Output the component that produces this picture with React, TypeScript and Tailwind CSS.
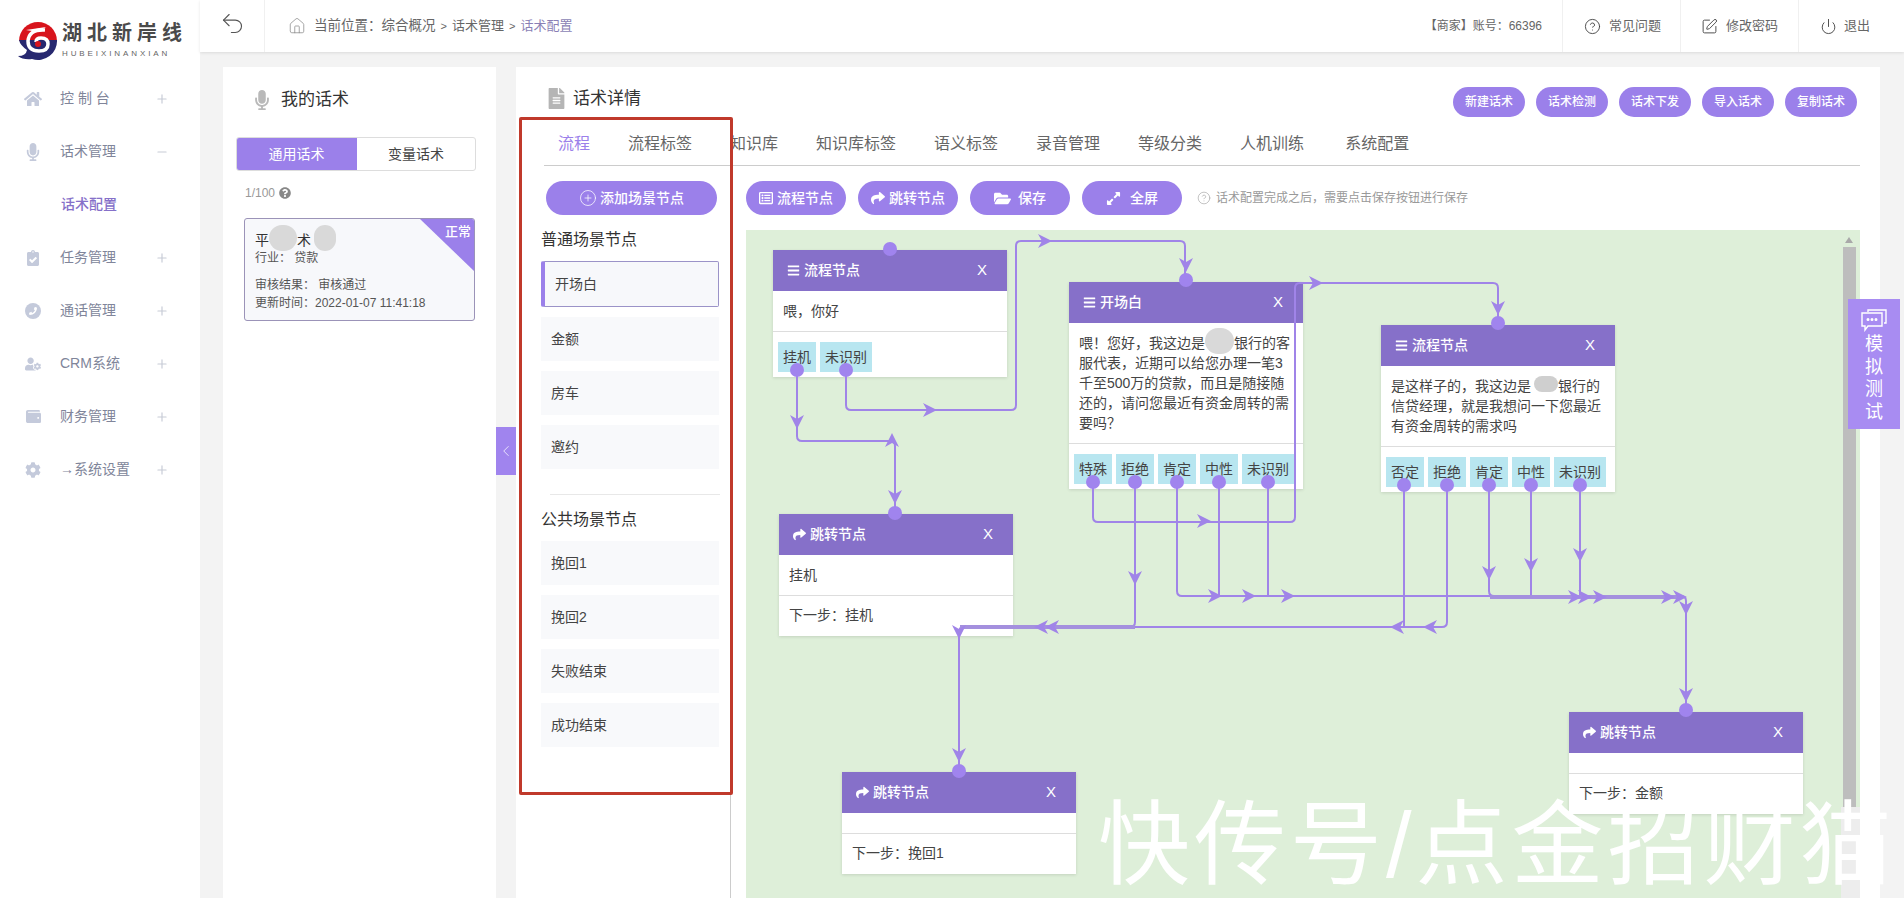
import type { ReactNode } from 'react'
import {
  FaHome, FaMicrophone, FaClipboardCheck, FaPhone, FaUserCog, FaWallet, FaCog,
  FaQuestionCircle, FaFileAlt, FaBars, FaShare, FaFolderOpen, FaExpandAlt, FaRegListAlt,
} from 'react-icons/fa'
import { Plus, Minus, Undo2, House, CircleHelp, SquarePen, Power, ChevronLeft, CirclePlus } from 'lucide-react'

const menu = [
  { label: '控 制 台', icon: <FaHome size={18} /> },
  { label: '话术管理', icon: <FaMicrophone size={18} />, open: true },
  { label: '任务管理', icon: <FaClipboardCheck size={16} /> },
  {
    label: '通话管理',
    icon: (
      <span className="flex h-[16px] w-[16px] items-center justify-center rounded-full bg-[#c4cadb] text-white">
        <FaPhone size={8} />
      </span>
    ),
  },
  { label: 'CRM系统', icon: <FaUserCog size={16} /> },
  { label: '财务管理', icon: <FaWallet size={15} /> },
  { label: '→系统设置', icon: <FaCog size={16} /> },
]

function Logo() {
  return (
    <div className="flex h-[72px] items-start pl-[17px] pt-[20px]">
      <svg width="42" height="42" viewBox="0 0 42 42" className="shrink-0">
        <path d="M2 21a19 19 0 0 1 38 0z" fill="#d8141c" />
        <path d="M40 20a19 19 0 0 1-25 19Q6 40 1 36q8 0 9-6-7-5-8-10z" fill="#27286f" />
        <path d="M28 10Q12 9 11 21q0 10 11 10 9 0 9-7 0-6-7-6-5 0-5 4" fill="none" stroke="#fff" strokeWidth="3.5" />
        <circle cx="21" cy="24" r="3" fill="#d8141c" />
        <path d="M9 10l20-3-8 5z" fill="#fff" />
      </svg>
      <div className="ml-[3px] w-[122px]">
        <div className="whitespace-nowrap text-[20px] font-bold leading-[27px] tracking-[5px] text-[#4a4a4a]">湖北新岸线</div>
        <div className="mt-[2px] whitespace-nowrap text-[8px] leading-[10px] tracking-[2.9px] text-[#666]">HUBEIXINANXIAN</div>
      </div>
    </div>
  )
}

function Sidebar() {
  return (
    <aside className="w-[200px] shrink-0 bg-white">
      <Logo />
      {menu.map((m) => (
        <div key={m.label}>
          <div className="flex h-[53px] items-center text-[14px] text-[#80859a]">
            <span className="ml-[23px] flex w-[20px] justify-center text-[#c4cadb]">{m.icon}</span>
            <span className="ml-[17px] w-[95px]">{m.label}</span>
            {m.open ? <Minus size={14} className="text-[#c7cbd6]" /> : <Plus size={14} className="text-[#c7cbd6]" />}
          </div>
          {m.open && (
            <div className="flex h-[53px] items-center pl-[61px] text-[14px] font-medium text-[#8670c9]">话术配置</div>
          )}
        </div>
      ))}
    </aside>
  )
}

function TopBar() {
  return (
    <header className="flex h-[52px] shrink-0 items-center bg-white text-[13px] text-[#666] shadow-[0_1px_3px_rgba(0,0,0,0.1)]">
      <div className="flex h-full w-[65px] items-center justify-center border-r border-[#f0f0f0] pb-[6px]">
        <Undo2 size={27} strokeWidth={1} className="text-[#555]" />
      </div>
      <House size={18} strokeWidth={1} className="ml-[23px] text-[#888]" />
      <span className="ml-[8px] text-[13.5px]">{'当前位置\uFF1A综合概况'}</span>
      <span className="mx-[5px] text-[11px]">&gt;</span>
      <span>话术管理</span>
      <span className="mx-[5px] text-[11px]">&gt;</span>
      <span className="text-[#8a7fb5]">话术配置</span>
      <span className="ml-auto mr-[20px] text-[12px]">{'【商家】账号\uFF1A66396'}</span>
      <div className="flex h-full w-[118px] items-center gap-[8px] border-l border-[#f0f0f0] pl-[21px]">
        <CircleHelp size={17} strokeWidth={1.3} className="text-[#444]" />
        常见问题
      </div>
      <div className="flex h-full w-[118px] items-center gap-[8px] border-l border-[#f0f0f0] pl-[20px]">
        <SquarePen size={17} strokeWidth={1.3} className="text-[#444]" />
        修改密码
      </div>
      <div className="flex h-full w-[106px] items-center gap-[7px] border-l border-[#f0f0f0] pl-[21px]">
        <Power size={17} strokeWidth={1.3} className="text-[#444]" />
        退出
      </div>
    </header>
  )
}

function Blur({ className, blob = 'inset-x-0 -inset-y-[6px] bg-[#d9d9d9]' }: { className: string; blob?: string }) {
  return (
    <span className={`relative inline-block h-[14px] ${className}`}>
      <span className={`absolute rounded-full ${blob}`} />
    </span>
  )
}

function Scripts() {
  return (
    <section className="h-full w-[273px] shrink-0 bg-white">
      <div className="flex h-[62px] items-center pl-[29px] pt-[3px] text-[17px] text-[#333]">
        <FaMicrophone size={20} className="text-[#b9b9b9]" />
        <span className="ml-[9px]">我的话术</span>
      </div>
      <div className="ml-[13px] mt-[8px] flex h-[34px] w-[240px] overflow-hidden rounded-[3px] border border-[#ddd] text-[14px]">
        <div className="-my-px -ml-px flex w-[121px] items-center justify-center bg-[#9b80ea] text-white">通用话术</div>
        <div className="flex flex-1 items-center justify-center text-[#444]">变量话术</div>
      </div>
      <div className="ml-[22px] mt-[14px] flex h-[16px] items-center gap-[4px] text-[12px] text-[#999]">
        1/100 <FaQuestionCircle size={12} className="text-[#888]" />
      </div>
      <div className="relative ml-[21px] mt-[17px] h-[103px] w-[231px] overflow-hidden rounded-[3px] border border-[#9b93b8] bg-[#f7f8fb] pl-[10px] pt-[12px] text-[12px] leading-[18px] text-[#555]">
        <div className="text-[14px] text-[#333]">
          平<Blur className="w-[28px]" />术<Blur className="ml-[3px] w-[22px]" />
        </div>
        <div>{'行业\uFF1A 贷款'}</div>
        <div className="mt-[9px]">{'审核结果\uFF1A 审核通过'}</div>
        <div>{'更新时间\uFF1A2022-01-07 11:41:18'}</div>
        <div className="absolute right-0 top-0 h-[52px] w-[54px] bg-[#9b80ea] [clip-path:polygon(0_0,100%_0,100%_100%)]" />
        <div className="absolute right-[3px] top-[4px] text-[13px] font-medium text-white">正常</div>
      </div>
    </section>
  )
}

function ScenePanel() {
  const common = ['金额', '房车', '邀约']
  const shared = ['挽回1', '挽回2', '失败结束', '成功结束']
  return (
    <div className="w-[190px] shrink-0 border-r border-[#ccc] pt-[15px]">
      <div className="ml-[5px] flex h-[34px] w-[171px] items-center justify-center gap-[3px] rounded-full bg-[#9b80ea] text-[14px] font-medium text-white">
        <CirclePlus size={18} strokeWidth={1} />
        添加场景节点
      </div>
      <div className="mt-[14px] text-[16px] leading-[22px] text-[#333]">普通场景节点</div>
      <div className="mt-[10px] flex h-[46px] w-[178px] items-center rounded-[2px] border border-l-[4px] border-[#9b93c8] border-l-[#9b80ea] bg-[#f7f8fb] pl-[10px] text-[14px] text-[#444]">
        开场白
      </div>
      {common.map((c) => (
        <div key={c} className="mt-[10px] flex h-[44px] w-[178px] items-center bg-[#f8f9fb] pl-[10px] text-[14px] text-[#444]">
          {c}
        </div>
      ))}
      <div className="ml-[9px] mt-[25px] h-px w-[170px] bg-[#e8e8e8]" />
      <div className="mt-[14px] text-[16px] leading-[22px] text-[#333]">公共场景节点</div>
      {shared.map((s) => (
        <div key={s} className="mt-[10px] flex h-[44px] w-[178px] items-center bg-[#f8f9fb] pl-[10px] text-[14px] text-[#444]">
          {s}
        </div>
      ))}
    </div>
  )
}

type NodeProps = {
  pos: string
  title: string
  jump?: boolean
  lines?: ReactNode[]
  tags?: string[]
  next?: string
}

function FlowNode({ pos, title, jump, lines = [], tags, next }: NodeProps) {
  return (
    <div className={`absolute w-[234px] bg-white shadow-[0_1px_3px_rgba(0,0,0,0.12)] ${pos}`}>
      <div className="flex h-[41px] items-center bg-[#8670c9] pl-[14px] pr-[20px] text-[14px] font-medium text-white">
        {jump ? <FaShare size={13} /> : <FaBars size={13} />}
        <span className="ml-[4px]">{title}</span>
        <span className="ml-auto text-[15px] font-normal">X</span>
      </div>
      <div className="border-b border-[#ddd] px-[10px] py-[10px] text-[14px] leading-[20px] text-[#444]">
        {lines.map((l, i) => (
          <div key={i} className="whitespace-nowrap">{l}</div>
        ))}
      </div>
      {tags && (
        <div className="flex gap-[4px] px-[5px] pb-[5px] pt-[10px]">
          {tags.map((t) => (
            <span key={t} className="flex h-[30px] items-center bg-[#b8e6f0] px-[5px] text-[14px] text-[#444]">{t}</span>
          ))}
        </div>
      )}
      {next && <div className="px-[10px] pb-[11px] pt-[9px] text-[14px] leading-[20px] text-[#444]">{'下一步\uFF1A' + next}</div>}
    </div>
  )
}

// arrow head of the connectors, angle in degrees, 0 points right
function Arrow({ x, y, a = 0 }: { x: number; y: number; a?: number }) {
  return <path d="M7 0L-7-7-3 0-7 7z" fill="#a084e8" transform={`translate(${x} ${y}) rotate(${a})`} />
}

const wires = [
  'M797 370V436Q797 441 802 441H890Q895 441 895 446V513',
  'M846 370V405Q846 410 851 410H1011Q1016 410 1016 405V246Q1016 241 1021 241H1180Q1185 241 1185 246V280',
  'M1093 482V517Q1093 522 1098 522H1290Q1295 522 1295 517V288Q1295 283 1300 283H1493Q1498 283 1498 288V323',
  'M1135 482V622Q1135 627 1130 627H964Q959 627 959 632V771',
  'M1177 482V591Q1177 596 1182 596H1681Q1686 596 1686 601V710',
  'M1219 482V596',
  'M1268 482V596',
  'M1404 485V627',
  'M1447 485V622Q1447 627 1442 627H1135',
  'M1489 485V591Q1489 596 1494 596H1680',
  'M1531 485V596',
  'M1580 485V596',
]

const dots = [
  [890, 249], [797, 370], [846, 370],
  [1186, 280], [1093, 482], [1135, 482], [1177, 482], [1219, 482], [1268, 482],
  [1498, 323], [1404, 485], [1447, 485], [1489, 485], [1531, 485], [1580, 485],
  [895, 513], [1686, 710], [959, 771],
]

const arrows = [
  [797, 422, 90], [892, 440, -90], [895, 497, 90], [930, 410, 0], [1045, 241, 0], [1186, 265, 90],
  [1316, 283, 0], [1498, 308, 90], [1204, 521, 0], [1135, 578, 90],
  [1215, 596, 0], [1249, 596, 0], [1288, 596, 0],
  [1489, 573, 90], [1531, 565, 90], [1580, 555, 90],
  [1575, 597, 0], [1585, 597, 0], [1600, 597, 0], [1668, 597, 0], [1680, 597, 0],
  [1686, 608, 90], [1686, 695, 90],
  [1041, 627, 180], [1052, 627, 180], [1397, 627, 180], [1430, 627, 180],
  [959, 632, 90], [959, 755, 90],
]

function Canvas() {
  return (
    <div className="relative mt-[15px] h-[668px] w-[1114px] bg-[#deefd9]">
      <FlowNode pos="left-[27px] top-[20px]" title="流程节点" lines={['喂\uFF0C你好']} tags={['挂机', '未识别']} />
      <FlowNode
        pos="left-[323px] top-[52px]"
        title="开场白"
        lines={[
          <>{'喂\uFF01您好\uFF0C我这边是'}<Blur className="w-[29px]" />银行的客</>,
          '服代表\uFF0C近期可以给您办理一笔3',
          '千至500万的贷款\uFF0C而且是随接随',
          '还的\uFF0C请问您最近有资金周转的需',
          '要吗\uFF1F',
        ]}
        tags={['特殊', '拒绝', '肯定', '中性', '未识别']}
      />
      <FlowNode
        pos="left-[635px] top-[95px]"
        title="流程节点"
        lines={[
          <>{'是这样子的\uFF0C我这边是'}<Blur className="w-[27px]" blob="left-[3px] right-0 -top-[1px] h-[16px] bg-[#cfcfcf]" />银行的</>,
          '信贷经理\uFF0C就是我想问一下您最近',
          '有资金周转的需求吗',
        ]}
        tags={['否定', '拒绝', '肯定', '中性', '未识别']}
      />
      <FlowNode pos="left-[33px] top-[284px]" title="跳转节点" jump lines={['挂机']} next="挂机" />
      <FlowNode pos="left-[823px] top-[482px]" title="跳转节点" jump next="金额" />
      <FlowNode pos="left-[96px] top-[542px]" title="跳转节点" jump next="挽回1" />
      <svg className="absolute inset-0" width="1114" height="668" viewBox="746 230 1114 668" fill="none">
        {wires.map((d) => (
          <path key={d} d={d} stroke="#a084e8" strokeWidth="2" />
        ))}
        <path d="M1490 597H1680M960 627H1135" stroke="#a490de" strokeWidth="4" />
        {arrows.map(([x, y, a]) => (
          <Arrow key={`${x}-${y}`} x={x} y={y} a={a} />
        ))}
        {dots.map(([x, y]) => (
          <circle key={`${x}-${y}`} cx={x} cy={y} r="7" fill="#a084ee" />
        ))}
      </svg>
      {/* scrollbar */}
      <div className="absolute bottom-0 right-0 top-[577px] w-[19px] bg-[#ededed]" />
      <div className="absolute right-[4px] top-[17px] h-[560px] w-[13px] bg-[#bdbdbd]" />
      <div className="absolute right-[7px] top-[7px] h-0 w-0 border-x-[4px] border-b-[6px] border-x-transparent border-b-[#a9a9a9]" />
    </div>
  )
}

function Detail() {
  const tabs = ['流程标签', '知识库', '知识库标签', '语义标签', '录音管理', '等级分类', '人机训练']
  const actions = ['新建话术', '话术检测', '话术下发', '导入话术', '复制话术']
  const toolbarBtn = 'flex h-[34px] w-[100px] items-center justify-center rounded-full bg-[#9b80ea] text-[14px] font-medium text-white'
  return (
    <section className="relative ml-[20px] h-full w-[1364px] shrink-0 bg-white pl-[25px] pr-[20px]">
      <div className="flex h-[50px] items-end">
        <div className="mb-[6px] ml-[5px] flex items-center text-[17px] text-[#333]">
          <FaFileAlt size={21} className="text-[#b5b5b5]" />
          <span className="ml-[6px]">话术详情</span>
        </div>
        <div className="ml-auto flex gap-[11px] self-start pr-[3px] pt-[20px]">
          {actions.map((a) => (
            <div key={a} className="flex h-[30px] w-[72px] items-center justify-center rounded-full bg-[#9b80ea] text-[12px] font-medium text-white">
              {a}
            </div>
          ))}
        </div>
      </div>
      <div className="ml-[3px] flex h-[49px] items-center gap-[38px] border-b border-[#ccc] pl-[14px] pt-[5px] text-[16px] text-[#666]">
        <span className="text-[#9b80ea]">流程</span>
        {tabs.map((t) => (
          <span key={t}>{t}</span>
        ))}
        <span className="ml-[3px]">系统配置</span>
      </div>
      <div className="flex">
        <ScenePanel />
        <div className="ml-[15px] pt-[15px]">
          <div className="flex h-[34px] items-center gap-[12px]">
            <div className={toolbarBtn}><FaRegListAlt size={14} className="mr-[4px]" />流程节点</div>
            <div className={toolbarBtn}><FaShare size={14} className="mr-[4px]" />跳转节点</div>
            <div className={toolbarBtn}><FaFolderOpen size={17} className="mr-[7px]" />保存</div>
            <div className={toolbarBtn}><FaExpandAlt size={15} className="mr-[9px]" />全屏</div>
            <CircleHelp size={14} strokeWidth={1} className="ml-[3px] text-[#999]" />
            <span className="-ml-[7px] text-[12px] text-[#999]">{'话术配置完成之后\uFF0C需要点击保存按钮进行保存'}</span>
          </div>
          <Canvas />
        </div>
      </div>
      {/* red annotation box */}
      <div className="pointer-events-none absolute left-[3px] top-[50px] h-[678px] w-[214px] rounded-[2px] border-[3px] border-[#c0392b]" />
      {/* collapse handle */}
      <div className="absolute -left-[20px] top-[360px] flex h-[48px] w-[20px] items-center justify-center bg-[#a084ee] text-white">
        <ChevronLeft size={18} strokeWidth={1} />
      </div>
    </section>
  )
}

export default function App() {
  return (
    <div className="relative flex h-[898px] w-[1904px] overflow-hidden bg-[#f3f3f3] [font-family:'Liberation_Sans','Noto_Sans_CJK_SC',sans-serif]">
      <Sidebar />
      <div className="flex min-w-0 flex-1 flex-col">
        <TopBar />
        <div className="flex flex-1 overflow-hidden pl-[23px] pt-[15px]">
          <Scripts />
          <Detail />
        </div>
      </div>
      {/* floating test tab */}
      <div className="absolute left-[1848px] top-[299px] flex h-[130px] w-[52px] flex-col items-center bg-[#a88cf2] pt-[9px] text-[18px] leading-[22.5px] text-white">
        <svg width="28" height="24" viewBox="0 0 28 24" fill="none" stroke="currentColor" strokeWidth="1.4" className="mb-[1px]">
          <path d="M8 4V2h18v13h-2" />
          <path d="M2 5h20v13H8l-3 4v-4H2z" />
          <circle cx="8" cy="11.5" r="0.8" fill="currentColor" />
          <circle cx="12" cy="11.5" r="0.8" fill="currentColor" />
          <circle cx="16" cy="11.5" r="0.8" fill="currentColor" />
        </svg>
        <span>模</span>
        <span>拟</span>
        <span>测</span>
        <span>试</span>
      </div>
      {/* watermark */}
      <div className="pointer-events-none absolute left-[1098px] top-[803px] whitespace-nowrap text-[92px] font-normal leading-[84px] tracking-[4px] text-white">
        快传号/点金招财猫
      </div>
    </div>
  )
}
